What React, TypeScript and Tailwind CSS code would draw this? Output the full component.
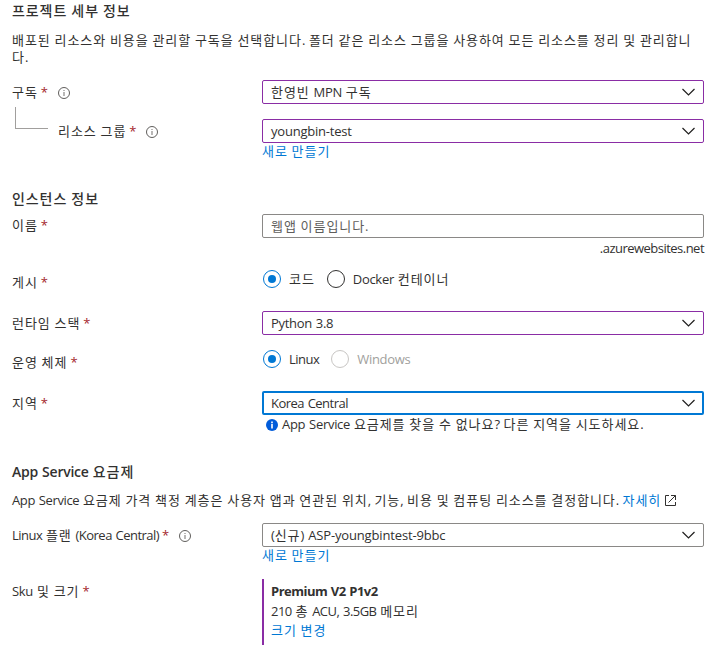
import type { ReactNode } from 'react';

const HANGUL = /([\uac00-\ud7a3]+(?: [\uac00-\ud7a3]+)* ?)/;

/** Splits a string into Hangul and Latin runs so each gets its own metrics. */
function T({ children, latin = 'tracking-[-0.3px]' }: { children: string; latin?: string }) {
  return (
    <span className="whitespace-pre">
      {children.split(HANGUL).map((run, i) =>
        i % 2 === 1 ? (
          <span key={i} className="font-['Noto_Sans_CJK_KR',sans-serif] tracking-[0.93px]">
            {run}
          </span>
        ) : (
          <span key={i} className={`font-['Open_Sans','Noto_Sans_CJK_KR',sans-serif] [word-spacing:0.8px] ${latin}`}>
            {run}
          </span>
        ),
      )}
    </span>
  );
}

const tight = 'tracking-[-0.52px]';
const loose = 'tracking-[-0.15px]';

function InfoIcon() {
  return (
    <svg width="12" height="12" viewBox="0 0 12 12" fill="none" className="ml-[10px] mt-px shrink-0">
      <circle cx="6" cy="6" r="5.5" stroke="#605e5c" />
      <path d="M6 5v4M6 3v1" stroke="#8a8886" strokeWidth="1.2" />
    </svg>
  );
}

function Label({
  text,
  className,
  info = false,
  latin,
}: {
  text: string;
  className: string;
  info?: boolean;
  latin?: string;
}) {
  return (
    <div className={`flex h-5 w-[250px] shrink-0 items-center ${className}`}>
      <T latin={latin}>{text}</T>
      <span className="ml-[3px] font-['Open_Sans',sans-serif] text-[#a4262c]">*</span>
      {info && <InfoIcon />}
    </div>
  );
}

function Row({ label, className, children }: { label: ReactNode; className: string; children: ReactNode }) {
  return (
    <div className={`flex items-start ${className}`}>
      {label}
      <div className="w-[442px]">{children}</div>
    </div>
  );
}

function Chevron() {
  return (
    <svg width="13" height="8" viewBox="0 0 13 8" fill="none" className="shrink-0">
      <path d="M0.5 1L6.5 7L12.5 1" stroke="#201f1e" strokeWidth="1.2" />
    </svg>
  );
}

function Select({ text, tone, latin }: { text: string; tone: string; latin?: string }) {
  return (
    <div className={`flex h-6 items-center justify-between rounded-[2px] ${tone}`}>
      <T latin={latin}>{text}</T>
      <Chevron />
    </div>
  );
}

function Radio({
  text,
  checked = false,
  disabled = false,
  latin,
}: {
  text: string;
  checked?: boolean;
  disabled?: boolean;
  latin?: string;
}) {
  const ring = checked ? 'border-[#0078d4]' : disabled ? 'border-[#c8c6c4]' : 'border-[#323130]';
  return (
    <div className={`flex h-[18px] items-center gap-2 ${disabled ? 'text-[#a19f9d]' : ''}`}>
      <span className={`flex size-[18px] items-center justify-center rounded-full border ${ring}`}>
        {checked && <span className="size-2 rounded-full bg-[#0078d4]" />}
      </span>
      <T latin={latin}>{text}</T>
    </div>
  );
}

function Heading({ text, className }: { text: string; className: string }) {
  return (
    <h2 className={`flex h-[22px] items-center pb-[2px] text-[14px] font-medium ${className}`}>
      <T latin="font-semibold tracking-[-0.25px]">{text}</T>
    </h2>
  );
}

function Link({ text }: { text: string }) {
  return (
    <a className="flex h-[18px] items-center pb-[2px] text-[#0078d4]">
      <T>{text}</T>
    </a>
  );
}

const purple = 'border border-[#8a2da5] pl-2 pr-2';
const gray = 'border border-[#8a8886] pl-2 pr-2';
const focus = 'border-2 border-[#0078d4] pl-[7px] pr-[7px]';

export default function App() {
  return (
    <main className="h-[658px] w-[721px] overflow-hidden bg-white pl-3 text-[13px] leading-[17px] text-[#323130]">
      <Heading text="프로젝트 세부 정보" className="" />
      <div className="mt-[9px]">
        <p className="flex h-[17px] items-center">
          <T>배포된 리소스와 비용을 관리할 구독을 선택합니다. 폴더 같은 리소스 그룹을 사용하여 모든 리소스를 정리 및 관리합니</T>
        </p>
        <p className="flex h-[17px] items-center">
          <T>다.</T>
        </p>
      </div>

      <Row className="mt-[15px]" label={<Label text="구독" info className="mt-[2px]" />}>
        <Select text="한영빈 MPN 구독" tone={purple} />
      </Row>
      <Row
        className="mt-[3px]"
        label={
          <div className="flex w-[250px] shrink-0 pl-[3px]">
            <div className="h-[22px] w-[33px] border-b border-l border-[#a19f9d]" />
            <Label text="리소스 그룹" info className="ml-[10px] mt-[14px] w-auto!" />
          </div>
        }
      >
        <div className="pt-3">
          <Select text="youngbin-test" tone={purple} latin="tracking-[-0.22px]" />
          <Link text="새로 만들기" />
        </div>
      </Row>

      <Heading text="인스턴스 정보" className="mt-[27px]" />
      <Row className="mt-1" label={<Label text="이름" className="mt-px" />}>
        <div className="flex h-6 items-center rounded-[2px] border border-[#8a8886] px-2 text-[#605e5c]">
          <T>웹앱 이름입니다.</T>
        </div>
        <div className="flex h-5 items-center justify-end">
          <T latin={tight}>.azurewebsites.net</T>
        </div>
      </Row>
      <Row className="mt-3" label={<Label text="게시" className="mt-[2px]" />}>
        <div className="flex gap-3 pl-px">
          <Radio text="코드" checked />
          <Radio text="Docker 컨테이너" />
        </div>
      </Row>
      <Row className="mt-[19px]" label={<Label text="런타임 스택" className="mt-[2px]" />}>
        <Select text="Python 3.8" tone={purple} />
      </Row>
      <Row className="mt-[15px]" label={<Label text="운영 체제" className="mt-[2px]" />}>
        <div className="flex gap-3 pl-px">
          <Radio text="Linux" checked latin={tight} />
          <Radio text="Windows" disabled />
        </div>
      </Row>
      <Row className="mt-[19px]" label={<Label text="지역" className="mt-[2px]" />}>
        <Select text="Korea Central" tone={focus} latin={tight} />
        <div className="flex h-[18px] items-center pl-1">
          <svg width="12" height="12" viewBox="0 0 12 12" className="mr-1 mt-px shrink-0">
            <circle cx="6" cy="6" r="6" fill="#015cda" />
            <path d="M6 5v4.5M6 2.5v1.7" stroke="#fff" strokeWidth="1.6" />
          </svg>
          <T>App Service 요금제를 찾을 수 없나요? 다른 지역을 시도하세요.</T>
        </div>
      </Row>

      <Heading text="App Service 요금제" className="mt-[28px]" />
      <p className="mt-[7px] flex h-5 items-center">
        <T latin="tracking-[-0.38px]">App Service 요금제 가격 책정 계층은 사용자 앱과 연관된 위치, 기능, 비용 및 컴퓨팅 리소스를 결정합니다. </T>
        <a className="text-[#0078d4]">
          <T>자세히</T>
        </a>
        <svg width="11" height="11" viewBox="0 0 11 11" fill="none" stroke="#323130" className="ml-1 shrink-0">
          <path d="M4 0.5H0.5V10.5H10.5V7M6 0.5H10.5V5M10.5 0.5L3.5 7.5" />
        </svg>
      </p>
      <Row
        className="mt-[13px]"
        label={<Label text="Linux 플랜 (Korea Central)" info className="mt-[2px]" latin={tight} />}
      >
        <Select text="(신규) ASP-youngbintest-9bbc" tone={gray} latin={loose} />
        <Link text="새로 만들기" />
      </Row>
      <Row className="mt-[14px]" label={<Label text="Sku 및 크기" className="mt-[2px]" />}>
        <div className="h-[66px] border-l-2 border-[#8a2da5] pl-[7px] pt-[2px]">
          <div className="flex h-5 items-center font-bold">
            <T latin={tight}>Premium V2 P1v2</T>
          </div>
          <div className="flex h-5 items-center">
            <T latin={tight}>210 총 ACU, 3.5GB 메모리</T>
          </div>
          <a className="flex h-5 items-center pb-[2px] text-[#0078d4]">
            <T>크기 변경</T>
          </a>
        </div>
      </Row>
    </main>
  );
}
